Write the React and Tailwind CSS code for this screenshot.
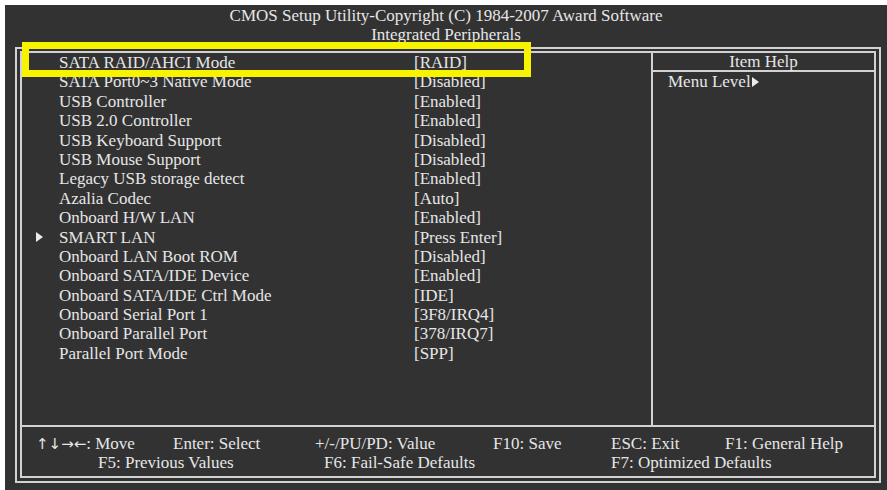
const rows = [
  ['SATA RAID/AHCI Mode', '[RAID]'],
  ['SATA Port0~3 Native Mode', '[Disabled]'],
  ['USB Controller', '[Enabled]'],
  ['USB 2.0 Controller', '[Enabled]'],
  ['USB Keyboard Support', '[Disabled]'],
  ['USB Mouse Support', '[Disabled]'],
  ['Legacy USB storage detect', '[Enabled]'],
  ['Azalia Codec', '[Auto]'],
  ['Onboard H/W LAN', '[Enabled]'],
  ['SMART LAN', '[Press Enter]', true],
  ['Onboard LAN Boot ROM', '[Disabled]'],
  ['Onboard SATA/IDE Device', '[Enabled]'],
  ['Onboard SATA/IDE Ctrl Mode', '[IDE]'],
  ['Onboard Serial Port 1', '[3F8/IRQ4]'],
  ['Onboard Parallel Port', '[378/IRQ7]'],
  ['Parallel Port Mode', '[SPP]'],
];

function Pointer({ className }) {
  return (
    <svg className={className} width="7" height="10" viewBox="0 0 7 10">
      <path d="M0 0 L7 5 L0 10 Z" fill="#ececec" />
    </svg>
  );
}

export default function App() {
  return (
    <div className="relative w-[887px] h-[490px] bg-white pt-[5px] pl-[5px] overflow-hidden">
      <div className="h-full bg-[#323232] text-[#e6e6e6] font-['Liberation_Serif',serif] text-[17px]">
        {/* Title */}
        <div className="pt-[1px] leading-[19px] text-center">
          <div>CMOS Setup Utility-Copyright (C) 1984-2007 Award Software</div>
          <div>Integrated Peripherals</div>
        </div>

        {/* Double frame */}
        <div className="ml-[10px] mt-[3px] w-[866px] h-[436px] border-2 border-[#d2d2d2] pt-[2px] px-[3px] pb-[3px]">
          <div className="h-full border-2 border-[#d2d2d2] flex flex-col">
            <div className="flex-1 flex">
              {/* Settings list */}
              <div className="w-[629px]">
                {rows.map(([label, value, sub]) => (
                  <div key={label} className="flex items-center h-[19.4px] leading-[19.4px]">
                    <div className="w-[37px] pl-[14px] flex items-center">
                      {sub && <Pointer />}
                    </div>
                    <div className="w-[355px] whitespace-nowrap">{label}</div>
                    <div className="whitespace-nowrap">{value}</div>
                  </div>
                ))}
              </div>

              {/* Item help */}
              <div className="flex-1 border-l-2 border-[#d2d2d2]">
                <div className="h-[17px] leading-[17px] text-center border-b-2 border-[#d2d2d2] box-content">
                  Item Help
                </div>
                <div className="pl-[15px] leading-[19.4px] flex items-center">
                  Menu Level
                  <Pointer className="ml-[1px]" />
                </div>
              </div>
            </div>

            {/* Key legend */}
            <div className="h-[51px] border-t-2 border-[#d2d2d2] pt-[8px] leading-[18.5px] whitespace-nowrap">
              <div className="flex pl-[14px]">
                <span className="w-[137px]">
                  <span className="font-['DejaVu_Sans',sans-serif] text-[15px]">↑↓→←</span>: Move
                </span>
                <span className="w-[142px]">Enter: Select</span>
                <span className="w-[178px]">+/-/PU/PD: Value</span>
                <span className="w-[118px]">F10: Save</span>
                <span className="w-[114px]">ESC: Exit</span>
                <span>F1: General Help</span>
              </div>
              <div className="flex pl-[76px]">
                <span className="w-[226px]">F5: Previous Values</span>
                <span className="w-[287px]">F6: Fail-Safe Defaults</span>
                <span>F7: Optimized Defaults</span>
              </div>
            </div>
          </div>
        </div>
      </div>

      {/* Highlight annotation */}
      <div className="absolute left-[22px] top-[42px] w-[509px] h-[35px] border-[7px] border-[#f8f400]" />
    </div>
  );
}
